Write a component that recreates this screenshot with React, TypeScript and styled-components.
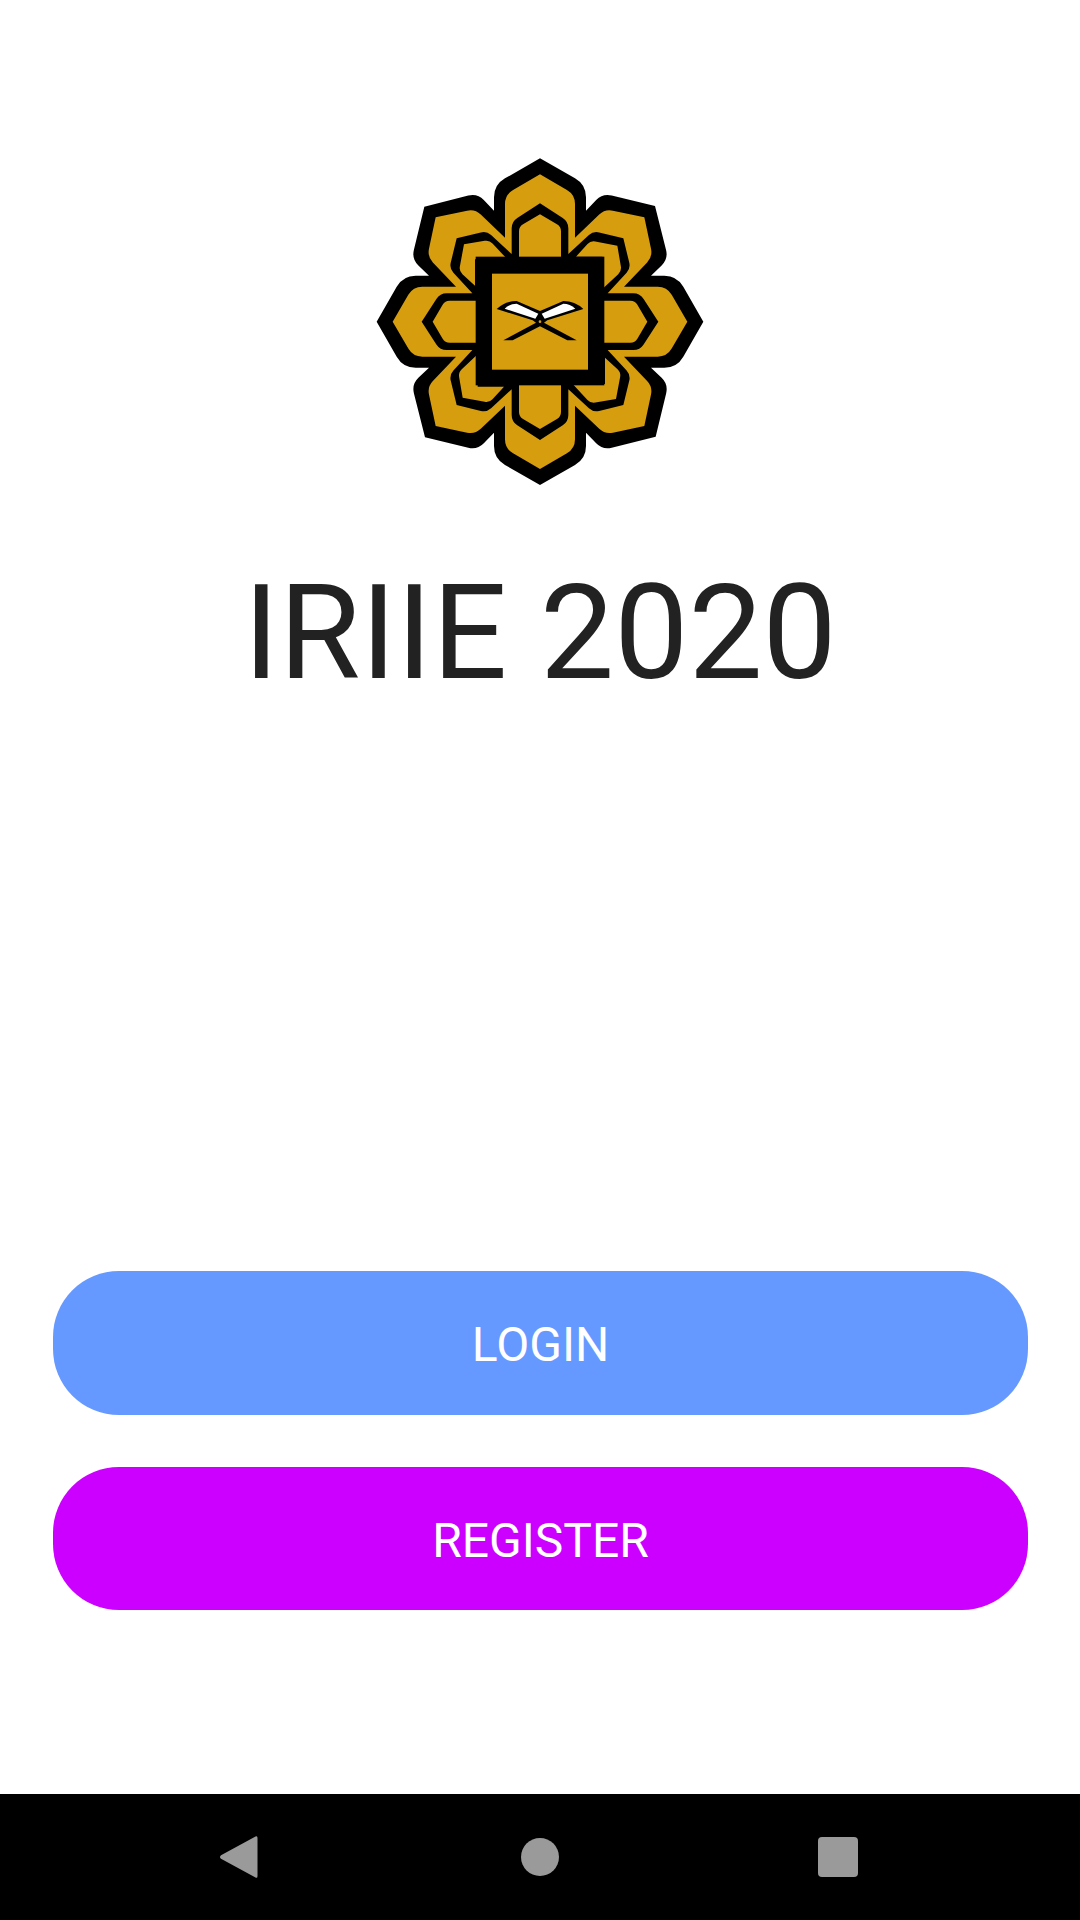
import styled, { createGlobalStyle } from "styled-components";

const GlobalStyle = createGlobalStyle`
  html, body {
    margin: 0;
    padding: 0;
    background: #ffffff;
  }
`;

const Screen = styled.div`
  display: flex;
  flex-direction: column;
  align-items: center;
  width: 1080px;
  height: 1920px;
  overflow: hidden;
  font-family: Roboto, "Liberation Sans", sans-serif;
`;

const Main = styled.main`
  flex: 1;
  display: flex;
  flex-direction: column;
  align-items: center;
  width: 100%;
  padding-top: 140px;
  box-sizing: border-box;
`;

const LogoMark = styled.svg`
  display: block;
  width: 360px;
  height: 360px;
`;

const Title = styled.h1`
  margin: 58px 0 0;
  color: #222222;
  font-size: 132px;
  font-weight: 400;
  line-height: 150px;
`;

const Actions = styled.div`
  display: flex;
  flex-direction: column;
  gap: 52px;
  align-self: stretch;
  margin: auto 52px 184px 53px;
`;

const ActionButton = styled.button<{ $color: string }>`
  height: 143.5px;
  border: none;
  border-radius: 66px;
  background: ${(props) => props.$color};
  color: #ffffff;
  font-family: inherit;
  font-size: 48px;
  font-weight: 400;
  padding: 4px 0 0;
`;

const NavBar = styled.nav`
  display: grid;
  grid-template-columns: repeat(3, 300px);
  justify-content: center;
  justify-items: center;
  align-items: center;
  flex: none;
  width: 100%;
  height: 126px;
  background: #000000;
`;

const NavIcon = styled.svg`
  display: block;
  width: 44px;
  height: 44px;
  fill: #9a9a9a;
`;

type Pt = [number, number, number];

// one eighth of a ring, from the top apex to the diagonal corner; the rest is mirrored
const outerRing: Pt[] = [
  [0, -490, 0],
  [138, -411, 38],
  [138, -333, 0],
  [188, -385, 28],
  [345, -347, 0],
];
const outerGold: Pt[] = [
  [0, -442, 0],
  [105, -381, 28],
  [105, -252, 0],
  [195, -338, 24],
  [313, -313, 0],
];
const middleRing: Pt[] = [
  [0, -355, 0],
  [85, -300, 20],
  [85, -203, 0],
  [160, -272, 18],
  [250, -250, 0],
];

const ringPoints = (octant: Pt[]) => {
  const mirrored = [...octant]
    .reverse()
    .slice(1, -1)
    .map(([x, y, r]): Pt => [-y, -x, r]);
  const quarter = [...octant, ...mirrored];
  const pts: Pt[] = [];
  for (let turn = 0; turn < 4; turn++) {
    quarter.forEach(([x, y, r]) => {
      if (turn === 0) pts.push([x, y, r]);
      if (turn === 1) pts.push([-y, x, r]);
      if (turn === 2) pts.push([-x, -y, r]);
      if (turn === 3) pts.push([y, -x, r]);
    });
  }
  return pts;
};

const roundedPath = (pts: Pt[]) => {
  const along = (a: Pt, b: Pt, dist: number) => {
    const len = Math.hypot(b[0] - a[0], b[1] - a[1]);
    return [a[0] + ((b[0] - a[0]) * dist) / len, a[1] + ((b[1] - a[1]) * dist) / len];
  };
  let d = "";
  pts.forEach((p, i) => {
    const prev = pts[(i + pts.length - 1) % pts.length];
    const next = pts[(i + 1) % pts.length];
    const start = along(p, prev, p[2]);
    const end = along(p, next, p[2]);
    d += `${i === 0 ? "M" : "L"}${start[0]} ${start[1]}`;
    if (p[2] > 0) d += `Q${p[0]} ${p[1]} ${end[0]} ${end[1]}`;
  });
  return d + "Z";
};

const topPiece: Pt[] = [
  [-63, -190, 0],
  [-63, -285, 14],
  [0, -322, 0],
  [63, -285, 14],
  [63, -190, 0],
];
const diagonalPiece: Pt[] = [
  [108, -195, 0],
  [152, -243, 14],
  [232, -228, 0],
  [245, -152, 14],
  [187, -98, 0],
  [187, -195, 0],
];

const GOLD = "#d69e0e";

const Logo = () => (
  <LogoMark viewBox="0 0 1080 1080" role="img" aria-label="IRIIE logo">
    <g transform="translate(540 545)">
      <path d={roundedPath(ringPoints(outerRing))} fill="#000000" />
      <path d={roundedPath(ringPoints(outerGold))} fill={GOLD} />
      <path d={roundedPath(ringPoints(middleRing))} fill="#000000" />
      {[0, 90, 180, 270].map((angle) => (
        <g key={angle} transform={`rotate(${angle})`}>
          <path d={roundedPath(topPiece)} fill={GOLD} />
          <path d={roundedPath(diagonalPiece)} fill={GOLD} />
        </g>
      ))}
      <rect x="-193" y="-195" width="386" height="386" fill="#000000" />
      <rect x="-144" y="-144" width="288" height="288" fill={GOLD} />
      {/* book on its stand */}
      <path
        d="M-130 -38Q-105 -62 -70 -62L0 -32L70 -62Q105 -62 130 -38L22 -4L12 3L110 56L82 56L0 14L-82 56L-110 56L-12 3L-22 -4Z"
        fill="#000000"
      />
      <path d="M-106 -39Q-90 -54 -70 -54L-5 -24L-14 -9Z" fill="#ffffff" />
      <path d="M106 -39Q90 -54 70 -54L5 -24L14 -9Z" fill="#ffffff" />
      <circle cx="0" cy="0" r="9" fill="#000000" />
      <circle cx="0" cy="0" r="4" fill={GOLD} />
    </g>
  </LogoMark>
);

export default function App() {
  return (
    <>
      <GlobalStyle />
      <Screen>
        <Main>
          <Logo />
          <Title>IRIIE 2020</Title>
          <Actions>
            <ActionButton $color="#6699ff">LOGIN</ActionButton>
            <ActionButton $color="#cc00ff">REGISTER</ActionButton>
          </Actions>
        </Main>
        <NavBar>
          <NavIcon viewBox="0 0 44 44">
            <path d="M37.500 1.500Q39.500 0.300 39.500 3V41Q39.500 43.700 37.500 42.500L3 23.800Q1 22 3 20.200Z" />
          </NavIcon>
          <NavIcon viewBox="0 0 44 44">
            <circle cx="22" cy="22" r="19" />
          </NavIcon>
          <NavIcon viewBox="0 0 44 44">
            <rect x="0" y="2" width="40" height="40" rx="4" />
          </NavIcon>
        </NavBar>
      </Screen>
    </>
  );
}
